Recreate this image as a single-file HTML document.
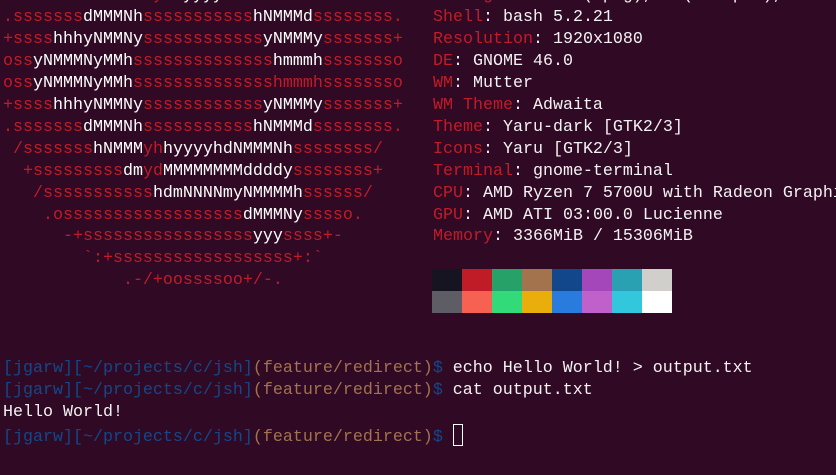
<!DOCTYPE html>
<html><head><meta charset="utf-8"><style>
html,body{margin:0;padding:0;background:#300a24;width:836px;height:475px;overflow:hidden}
pre{position:absolute;top:-15px;margin:0;font-family:"Liberation Mono",monospace;font-size:16.67px;line-height:21.95px;color:#f2f2f2;white-space:pre}
#l{left:3px}#i{left:433px}
.r{color:#c01c28}.w{color:#fff}
.b{color:#12488b}.o{color:#a2734c}
.pal{position:absolute;left:432px;top:269px;width:240px;height:44px}
.pal div{float:left;width:30px;height:22px}
.cur{display:inline-block;width:10px;height:22px;border:1px solid #fff;box-sizing:border-box;vertical-align:-5px}
</style></head><body>
<pre id="l"><span class="r"> /ssssssss</span><span class="w">hNMMM</span><span class="r">yh</span><span class="w">hyyyyhdNMMMNh</span><span class="r">ssssssss/</span>
<span class="r">.sssssss</span><span class="w">dMMMNh</span><span class="r">sssssssssss</span><span class="w">hNMMMd</span><span class="r">ssssssss.</span>
<span class="r">+ssss</span><span class="w">hhhyNMMNy</span><span class="r">ssssssssssss</span><span class="w">yNMMMy</span><span class="r">sssssss+</span>
<span class="r">oss</span><span class="w">yNMMMNyMMh</span><span class="r">ssssssssssssss</span><span class="w">hmmmh</span><span class="r">ssssssso</span>
<span class="r">oss</span><span class="w">yNMMMNyMMh</span><span class="r">sssssssssssssshmmmhssssssso</span>
<span class="r">+ssss</span><span class="w">hhhyNMMNy</span><span class="r">ssssssssssss</span><span class="w">yNMMMy</span><span class="r">sssssss+</span>
<span class="r">.sssssss</span><span class="w">dMMMNh</span><span class="r">sssssssssss</span><span class="w">hNMMMd</span><span class="r">ssssssss.</span>
<span class="r"> /sssssss</span><span class="w">hNMMM</span><span class="r">yh</span><span class="w">hyyyyhdNMMMNh</span><span class="r">ssssssss/</span>
<span class="r">  +sssssssss</span><span class="w">dm</span><span class="r">yd</span><span class="w">MMMMMMMMddddy</span><span class="r">ssssssss+</span>
<span class="r">   /sssssssssss</span><span class="w">hdmNNNNmyNMMMMh</span><span class="r">ssssss/</span>
<span class="r">    .ossssssssssssssssss</span><span class="w">dMMMNy</span><span class="r">sssso.</span>
<span class="r">      -+sssssssssssssssss</span><span class="w">yyy</span><span class="r">ssss+-</span>
<span class="r">        `:+ssssssssssssssssss+:`</span>
<span class="r">            .-/+oossssoo+/-.</span>



<span class="b">[jgarw][~/projects/c/jsh]</span><span class="o">(feature/redirect)</span><span class="b">$</span> echo Hello World! &gt; output.txt
<span class="b">[jgarw][~/projects/c/jsh]</span><span class="o">(feature/redirect)</span><span class="b">$</span> cat output.txt
Hello World!
<span class="b">[jgarw][~/projects/c/jsh]</span><span class="o">(feature/redirect)</span><span class="b">$</span> <span class="cur"></span></pre>
<pre id="i"><span class="r">Packages</span>: 1929 (dpkg), 9 (flatpak), 10
<span class="r">Shell</span>: bash 5.2.21
<span class="r">Resolution</span>: 1920x1080
<span class="r">DE</span>: GNOME 46.0
<span class="r">WM</span>: Mutter
<span class="r">WM Theme</span>: Adwaita
<span class="r">Theme</span>: Yaru-dark [GTK2/3]
<span class="r">Icons</span>: Yaru [GTK2/3]
<span class="r">Terminal</span>: gnome-terminal
<span class="r">CPU</span>: AMD Ryzen 7 5700U with Radeon Graphics
<span class="r">GPU</span>: AMD ATI 03:00.0 Lucienne
<span class="r">Memory</span>: 3366MiB / 15306MiB</pre>
<div class="pal">
<div style="background:#171421"></div><div style="background:#c01c28"></div><div style="background:#26a269"></div><div style="background:#a2734c"></div><div style="background:#12488b"></div><div style="background:#a347ba"></div><div style="background:#2aa1b3"></div><div style="background:#d0cfcc"></div>
<div style="background:#5e5c64"></div><div style="background:#f66151"></div><div style="background:#33da7a"></div><div style="background:#e9ad0c"></div><div style="background:#2a7bde"></div><div style="background:#c061cb"></div><div style="background:#33c7de"></div><div style="background:#ffffff"></div>
</div>
</body></html>
